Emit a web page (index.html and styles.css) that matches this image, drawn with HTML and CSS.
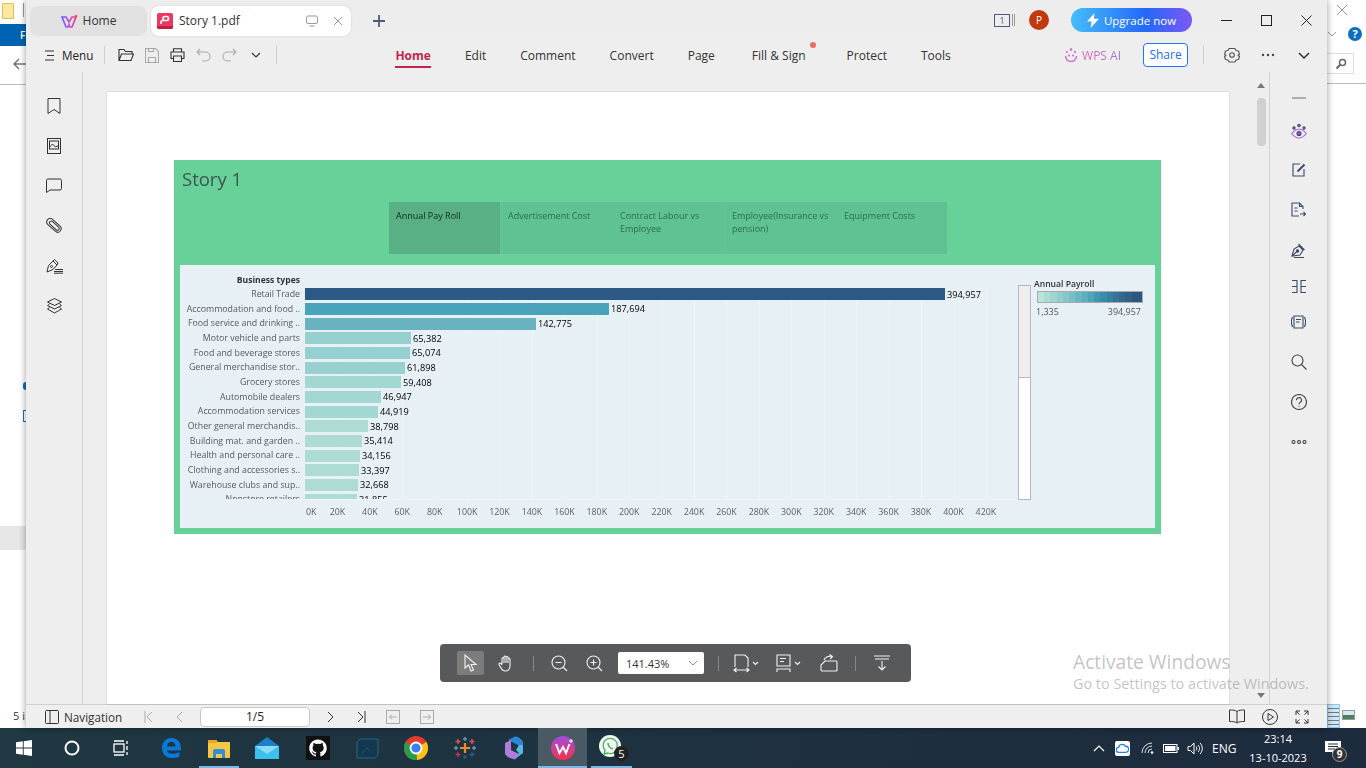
FILE: index.html
```html
<!DOCTYPE html>
<html lang="en">
<head>
<meta charset="utf-8">
<title>Story 1.pdf</title>
<link rel="stylesheet" href="styles.css">
</head>
<body>
<div class="desktop">
  <div class="behind">
    <div class="behind-left">
      <div class="bl-title"><span class="folder"></span><span class="bl-bar"></span></div>
      <div class="bl-ribbon">F</div>
      <div class="bl-nav"><svg width="16" height="14" viewBox="0 0 16 14" class="st"><path d="M15 7H2M7 2 2 7l5 5"/></svg></div>
      <span class="bl-dot"></span>
      <span class="bl-bracket"></span>
      <span class="bl-block"></span>
      <span class="bl-text">5 i</span>
    </div>
    <div class="behind-right">
      <div class="br-title"><svg width="12" height="12" viewBox="0 0 12 12" class="st thin"><path d="M1 1l10 10M11 1 1 11"/></svg></div>
      <div class="br-ribbon"><svg width="10" height="6" viewBox="0 0 10 6" class="st thin"><path d="M1 1l4 4 4-4"/></svg><span class="help">?</span></div>
      <div class="br-nav"><span class="br-search"><svg width="12" height="12" viewBox="0 0 12 12" class="st dark"><circle cx="7.500" cy="4.500" r="3"/><path d="M5.500 6.500 1.500 10.500" stroke-width="2"/></svg></span></div>
      <div class="br-status"><span class="br-list"></span><span class="br-img"></span></div>
    </div>
  </div>

  <div class="wps">
    <div class="tabbar">
      <div class="tab tab-home">
        <svg width="17" height="15" viewBox="0 0 17 15"><defs><linearGradient id="wg" x1="0" x2="1"><stop offset="0" stop-color="#6f5cf5"/><stop offset=".55" stop-color="#c050d8"/><stop offset="1" stop-color="#f0406a"/></linearGradient></defs><path d="M1 3h4l3 5 3-5h4l-4 10H9L8 10.500 7 13H5z" fill="none" stroke="url(#wg)" stroke-width="1.700"/><path d="M15 0l.6 1.400L17 2l-1.400.6L15 4l-.6-1.400L13 2l1.400-.6z" fill="#f0406a"/></svg>
        <span>Home</span>
      </div>
      <div class="tab tab-doc">
        <svg class="pdf" width="16" height="16" viewBox="0 0 16 16"><rect width="16" height="16" rx="2" fill="#e9395f"/><path d="M0 13h16v1a2 2 0 0 1-2 2H2a2 2 0 0 1-2-2z" fill="#c21f45"/><path d="M4 11V9.500a2 2 0 0 1 2-2h3.500a2 2 0 0 0 0-4H8a2 2 0 0 0-2 2v2" fill="none" stroke="#fff" stroke-width="1.700"/></svg>
        <span class="doc-name">Story 1.pdf</span>
        <svg class="doc-ic" width="12" height="12" viewBox="0 0 12 12"><rect x=".5" y="1" width="11" height="7.500" rx="1.500"/><path d="M3.500 11h5"/></svg>
        <svg class="doc-ic" width="10" height="10" viewBox="0 0 10 10"><path d="M1 1l8 8M9 1 1 9"/></svg>
      </div>
      <svg class="plus" width="14" height="14" viewBox="0 0 14 14"><path d="M7 1v12M1 7h12"/></svg>
      <div class="title-right">
        <span class="pagecount"><span class="pc-box">1</span><span class="pc-lines"></span></span>
        <span class="avatar">P</span>
        <span class="upgrade"><svg width="12" height="15" viewBox="0 0 12 15"><path d="M7.500 0 0 8.500h4.500L3.500 15 12 5.800H7z" fill="#fff"/></svg>Upgrade now</span>
        <svg class="winbtn" width="11" height="11" viewBox="0 0 11 11"><path d="M0 5.500h11"/></svg>
        <svg class="winbtn" width="11" height="11" viewBox="0 0 11 11"><rect x=".5" y=".5" width="10" height="10"/></svg>
        <svg class="winbtn" width="11" height="11" viewBox="0 0 11 11"><path d="M.5.500l10 10M10.500.500l-10 10"/></svg>
      </div>
    </div>

    <div class="ribbon">
      <div class="rb-left">
        <svg class="rb-ic" width="12" height="11" viewBox="0 0 12 11"><path d="M1 1h9M3 5.500h7M1 10h9"/></svg>
        <span class="menu-label">Menu</span>
        <span class="vsep"></span>
        <svg class="rb-ic" width="16" height="14" viewBox="0 0 16 14"><path d="M1 12V1.500h5l1.500 2H14V6M1 12.500 3.500 6h12L13 12.500z"/></svg>
        <svg class="rb-ic off" width="14" height="15" viewBox="0 0 14 15"><path d="M.5.500h10l3 3v11H.5zM3.500 14.500v-5h7v5M3.500.500v3h5v-3"/></svg>
        <svg class="rb-ic" width="15" height="14" viewBox="0 0 15 14"><path d="M3.500 4V.700h8V4M3.500 10.500H1V4h13v6.500h-2.500M3.500 8h8v5.500h-8z"/></svg>
        <svg class="rb-ic off" width="15" height="14" viewBox="0 0 15 14"><path d="M4 1 1 4l3 3M1 4h8.500a4.500 4.500 0 0 1 0 9H6"/></svg>
        <svg class="rb-ic off" width="15" height="14" viewBox="0 0 15 14"><path d="M11 1l3 3-3 3M14 4H5.500a4.500 4.500 0 0 0 0 9H9"/></svg>
        <svg class="rb-ic qa-more" width="10" height="6" viewBox="0 0 10 6"><path d="M1 1l4 4 4-4"/></svg>
        <span class="vsep"></span>
      </div>
      <nav class="rb-tabs">
        <span class="rb-tab active">Home</span>
        <span class="rb-tab">Edit</span>
        <span class="rb-tab">Comment</span>
        <span class="rb-tab">Convert</span>
        <span class="rb-tab">Page</span>
        <span class="rb-tab dotted">Fill &amp; Sign</span>
        <span class="rb-tab">Protect</span>
        <span class="rb-tab">Tools</span>
      </nav>
      <div class="rb-right">
        <svg width="14" height="15" viewBox="0 0 14 15"><path d="M1.500 8a5.500 5.500 0 0 0 11 0" fill="none" stroke="#d868c8" stroke-width="1.400"/><circle cx="7" cy="1.500" r="1.300" fill="#e060a8"/><circle cx="3" cy="4" r="1.100" fill="#d868c8"/><circle cx="11" cy="4" r="1.100" fill="#b070e8"/><circle cx="5" cy="7.500" r="1" fill="#c060d0"/><circle cx="9" cy="7.500" r="1" fill="#b070e8"/></svg>
        <span class="wpsai">WPS AI</span>
        <span class="share">Share</span>
        <span class="vsep"></span>
        <svg class="rb-ic gear" width="16" height="16" viewBox="0 0 16 16"><path d="M5 1.500h6l1 2 2.500.5 1 3.500-1.500 1 1.500 1-1 3-2.500.5-1 2H5l-1-2-2.500-.5-1-3 1.500-1-1.500-1 1-3.500L4 3.500z" stroke-linejoin="round"/><circle cx="8" cy="8" r="2.300"/></svg>
        <svg class="dots" width="14" height="4" viewBox="0 0 14 4"><circle cx="2" cy="2" r="1.200"/><circle cx="7" cy="2" r="1.200"/><circle cx="12" cy="2" r="1.200"/></svg>
        <svg class="rb-ic chev" width="12" height="7" viewBox="0 0 12 7"><path d="M1 1l5 5 5-5" stroke-width="1.500"/></svg>
      </div>
    </div>

    <div class="workspace">
      <aside class="side-left">
        <svg class="sd" width="14" height="16" viewBox="0 0 14 16"><path d="M1 .500h12v15L7 11.500l-6 4z"/></svg>
        <svg class="sd" width="14" height="16" viewBox="0 0 14 16"><rect x=".5" y=".5" width="13" height="15"/><rect x="2.500" y="3" width="9" height="8"/><path d="M2.500 9 5.500 6l3 3 3-1.500"/></svg>
        <svg class="sd" width="16" height="15" viewBox="0 0 16 15"><path d="M2 .500h12A1.500 1.500 0 0 1 15.500 2v8a1.500 1.500 0 0 1-1.500 1.500H4L.5 14V2A1.500 1.500 0 0 1 2 .500z"/></svg>
        <svg class="sd" width="16" height="16" viewBox="0 0 16 16"><rect x="-1" y="4" width="17" height="7" rx="3.500" transform="rotate(42 8 8)"/><rect x="2" y="5.800" width="12" height="3.500" rx="1.700" transform="rotate(42 8 8)"/></svg>
        <svg class="sd" width="17" height="15" viewBox="0 0 17 15"><path d="M1 13.500 2.500 7 7 2.500 11 6.500 7 11zM7 2.500 8.500 1 12 4.500 11 6.500"/><circle cx="5.500" cy="8" r="1"/><path d="M9 11h8M8 13h9M8 14.700h9"/></svg>
        <svg class="sd" width="15" height="16" viewBox="0 0 15 16"><path d="M7.500.500 14.500 4l-7 3.500L.5 4zM2.500 6 .5 7.500l7 3.500 7-3.500L12.500 6M2.500 9.500l-2 1.500 7 4 7-4-2-1.500"/></svg>
      </aside>

      <main class="doc">
        <div class="page">
          <section class="story">
            <h1 class="story-title">Story 1</h1>
            <div class="points">
              <div class="point current">Annual Pay Roll</div>
              <div class="point">Advertisement Cost</div>
              <div class="point split">Contract Labour vs Employee</div>
              <div class="point">Employee(Insurance vs pension)</div>
              <div class="point">Equipment Costs</div>
            </div>
            <div class="pane">
              <div class="chart">
                <div class="chart-head">Business types</div>
                <div class="chart-body">
                  <div class="labels">
                    <div class="lab">Retail Trade</div>
                    <div class="lab">Accommodation and food ..</div>
                    <div class="lab">Food service and drinking ..</div>
                    <div class="lab">Motor vehicle and parts</div>
                    <div class="lab">Food and beverage stores</div>
                    <div class="lab">General merchandise stor..</div>
                    <div class="lab">Grocery stores</div>
                    <div class="lab">Automobile dealers</div>
                    <div class="lab">Accommodation services</div>
                    <div class="lab">Other general merchandis..</div>
                    <div class="lab">Building mat. and garden ..</div>
                    <div class="lab">Health and personal care ..</div>
                    <div class="lab">Clothing and accessories s..</div>
                    <div class="lab">Warehouse clubs and sup..</div>
                    <div class="lab">Nonstore retailers</div>
                  </div>
                  <div class="plot">
                    <div class="row"><span class="bar" style="width:640px;background:#2c5985"></span><span class="val">394,957</span></div>
                    <div class="row"><span class="bar" style="width:304px;background:#49a3ba"></span><span class="val">187,694</span></div>
                    <div class="row"><span class="bar" style="width:231px;background:#69b3c1"></span><span class="val">142,775</span></div>
                    <div class="row"><span class="bar" style="width:106px;background:#96cfcf"></span><span class="val">65,382</span></div>
                    <div class="row"><span class="bar" style="width:105px;background:#96cfcf"></span><span class="val">65,074</span></div>
                    <div class="row"><span class="bar" style="width:100px;background:#98d0cf"></span><span class="val">61,898</span></div>
                    <div class="row"><span class="bar" style="width:96px;background:#a3d7d1"></span><span class="val">59,408</span></div>
                    <div class="row"><span class="bar" style="width:76px;background:#a3d7d1"></span><span class="val">46,947</span></div>
                    <div class="row"><span class="bar" style="width:73px;background:#a3d7d1"></span><span class="val">44,919</span></div>
                    <div class="row"><span class="bar" style="width:63px;background:#aedcd5"></span><span class="val">38,798</span></div>
                    <div class="row"><span class="bar" style="width:57px;background:#aedcd5"></span><span class="val">35,414</span></div>
                    <div class="row"><span class="bar" style="width:55px;background:#aedcd5"></span><span class="val">34,156</span></div>
                    <div class="row"><span class="bar" style="width:54px;background:#aedcd5"></span><span class="val">33,397</span></div>
                    <div class="row"><span class="bar" style="width:53px;background:#aedcd5"></span><span class="val">32,668</span></div>
                    <div class="row"><span class="bar" style="width:52px;background:#aedcd5"></span><span class="val">31,855</span></div>
                  </div>
                </div>
                <div class="axis">
                  <span class="tick first">0K</span><span class="tick">20K</span><span class="tick">40K</span><span class="tick">60K</span><span class="tick">80K</span><span class="tick">100K</span><span class="tick">120K</span><span class="tick">140K</span><span class="tick">160K</span><span class="tick">180K</span><span class="tick">200K</span><span class="tick">220K</span><span class="tick">240K</span><span class="tick">260K</span><span class="tick">280K</span><span class="tick">300K</span><span class="tick">320K</span><span class="tick">340K</span><span class="tick">360K</span><span class="tick">380K</span><span class="tick">400K</span><span class="tick">420K</span>
                </div>
              </div>
              <div class="vscroll"><div class="vthumb"></div></div>
              <div class="legend">
                <div class="legend-title">Annual Payroll</div>
                <div class="ramp"></div>
                <div class="legend-scale"><span>1,335</span><span>394,957</span></div>
              </div>
            </div>
          </section>
        </div>
        <div class="doc-scroll">
          <span class="arrow-up"></span>
          <span class="doc-thumb"></span>
          <span class="arrow-down"></span>
        </div>
      </main>

      <aside class="side-right">
        <svg class="sr mb25" width="14" height="2" viewBox="0 0 14 2"><path d="M0 1h14" stroke="#999" stroke-width="1.500"/></svg>
        <svg class="sr mb24" width="16" height="15" viewBox="0 0 16 15"><path d="M.7 9.500C3 6.500 5.500 5.300 8 5.300s5 1.200 7.300 4.200C13 12.500 10.500 14 8 14S3 12.500.7 9.500z" fill="none" stroke="#b060e0" stroke-width="1.100"/><circle cx="8" cy="9.500" r="2" fill="#8a50d8"/><circle cx="8" cy="1.500" r="1.200" fill="#e060a0"/><circle cx="3" cy="4" r="1.100" fill="#d868c0"/><circle cx="13" cy="4" r="1.100" fill="#b070e0"/></svg>
        <svg class="sr mb25" width="14" height="14" viewBox="0 0 14 14"><path d="M8 1H1v12h11V6"/><path d="M5.500 8.500 12.500 1.500" stroke-width="2"/></svg>
        <svg class="sr mb26" width="15" height="15" viewBox="0 0 15 15"><path d="M12 7V4.500L8.500 1H1v13h7"/><path d="M8.500 1v3.500H12M3.500 6h3M3.500 9h3M9 12h5.500M12.500 10l2 2-2 2"/></svg>
        <svg class="sr mb22" width="15" height="15" viewBox="0 0 15 15"><path d="M1 13 3 6l5-3 4 4-3 5zM7.500 1l6 6"/><circle cx="6.500" cy="8" r="1.200" fill="#3d4a66"/><path d="M1 13l4.500-4M3 14.500h10"/></svg>
        <svg class="sr mb22" width="14" height="13" viewBox="0 0 14 13"><path d="M0 .5h5v12H0M14 .5H9v12h5M0 6.500h5M9 6.500h5"/></svg>
        <svg class="sr mb25" width="15" height="14" viewBox="0 0 15 14"><path d="M3 1h9v12H3zM5 4.500h5M5 7h3.500M1.500 2C.2 5 .2 9 1.500 12M13.500 2c1.300 3 1.300 7 0 10"/></svg>
        <svg class="sr gray mb24" width="16" height="16" viewBox="0 0 16 16"><circle cx="6.500" cy="6.500" r="5.500"/><path d="M10.500 10.500 15.500 15.500"/></svg>
        <svg class="sr gray mb30" width="16" height="16" viewBox="0 0 16 16"><circle cx="8" cy="8" r="7.500"/><path d="M5.500 6.200a2.500 2.500 0 1 1 3.600 2.200C8.300 8.900 8 9.300 8 10.300M8 11.800v1"/></svg>
        <svg class="sr gray" width="16" height="4" viewBox="0 0 16 4"><circle cx="2.500" cy="2" r="1.500"/><circle cx="8" cy="2" r="1.500"/><circle cx="13.500" cy="2" r="1.500"/></svg>
      </aside>
    </div>

    <footer class="status">
      <svg class="stt" width="14" height="14" viewBox="0 0 14 14"><rect x=".5" y=".5" width="13" height="13" rx="1"/><path d="M5 .5v13"/></svg>
      <span class="nav-label">Navigation</span>
      <svg class="stt off first-nav" width="9" height="12" viewBox="0 0 9 12"><path d="M1 0v12M8 1 3 6l5 5"/></svg>
      <svg class="stt off prev-nav" width="7" height="12" viewBox="0 0 7 12"><path d="M6 1 1 6l5 5"/></svg>
      <span class="page-input">1/5</span>
      <svg class="stt next-nav" width="7" height="12" viewBox="0 0 7 12"><path d="M1 1l5 5-5 5"/></svg>
      <svg class="stt last-nav" width="9" height="12" viewBox="0 0 9 12"><path d="M8 0v12M1 1l5 5-5 5"/></svg>
      <svg class="stt off back-nav" width="14" height="14" viewBox="0 0 14 14"><rect x=".5" y=".5" width="13" height="13"/><path d="M11 7H3.500M6 4.500 3.500 7 6 9.500"/></svg>
      <svg class="stt off fwd-nav" width="14" height="14" viewBox="0 0 14 14"><rect x=".5" y=".5" width="13" height="13"/><path d="M3 7h7.500M8 4.500 10.500 7 8 9.500"/></svg>
      <div class="status-right">
        <svg class="stt" width="16" height="15" viewBox="0 0 16 15"><path d="M8 2.500C6 1 3.500 1 .5 1v11.500c3 0 5.500 0 7.500 1.500 2-1.500 4.500-1.500 7.500-1.500V1C12.500 1 10 1 8 2.500zM8 2.500V14"/></svg>
        <svg class="stt" width="16" height="16" viewBox="0 0 16 16"><circle cx="8" cy="8" r="7.500"/><path d="M6 4.500 11.500 8 6 11.500z"/></svg>
        <svg class="stt" width="14" height="14" viewBox="0 0 14 14"><path d="M1 5V1h4M9 1h4v4M13 9v4H9M5 13H1V9M1 1l3.500 3.500M13 1 9.500 4.500M13 13 9.500 9.500M1 13l3.500-3.500"/></svg>
      </div>
    </footer>

    <div class="float-bar">
      <span class="fb-btn on"><svg class="fb" width="15" height="18" viewBox="0 0 15 18"><path d="M2 1v13l3.500-3 2.500 6 2.500-1-2.500-5.500H13z"/></svg></span>
      <span class="fb-btn hand"><svg class="fb" width="15" height="17" viewBox="0 0 15 17"><path d="M4 9V3.500a1 1 0 0 1 2 0V8M6 8V2a1 1 0 0 1 2 0v6M8 8V2.500a1 1 0 0 1 2 0V8M10 8V4a1 1 0 0 1 2 0v7c0 3-2 5-4.500 5S4 15 3 13L1 9.500c-.5-1 1-2 2-1L4 10"/></svg></span>
      <span class="fb-sep"></span>
      <span class="fb-btn"><svg class="fb" width="17" height="17" viewBox="0 0 17 17"><circle cx="7.500" cy="7.500" r="6.500"/><path d="M4.500 7.500h6M12 12l4 4"/></svg></span>
      <span class="fb-btn"><svg class="fb" width="17" height="17" viewBox="0 0 17 17"><circle cx="7.500" cy="7.500" r="6.500"/><path d="M4.500 7.500h6M7.500 4.500v6M12 12l4 4"/></svg></span>
      <span class="zoom-box"><span>141.43%</span><svg class="zb-chev" width="10" height="6" viewBox="0 0 10 6"><path d="M1 1l4 4 4-4"/></svg></span>
      <span class="fb-sep"></span>
      <span class="fb-btn wide"><svg class="fb" width="26" height="19" viewBox="0 0 26 19"><path d="M2 13V1h10l3 3v9M1 16h15M3.500 14 1 16l2.500 2M13.500 14l2.500 2-2.500 2M20 8l2.500 2.500L25 8"/></svg></span>
      <span class="fb-btn wide"><svg class="fb" width="26" height="19" viewBox="0 0 26 19"><path d="M2 1h13v11H2zM5 4.500h6M5 7.500h4M2 18v-3h13v3M20 8l2.500 2.500L25 8"/></svg></span>
      <span class="fb-btn rot"><svg class="fb" width="18" height="18" viewBox="0 0 18 18"><path d="M5 7h11a1 1 0 0 1 1 1v8a1 1 0 0 1-1 1H2a1 1 0 0 1-1-1v-5zM4 6c1-3 5-4.500 8-3.500M9.500.500 12.500 2.500 10 5"/></svg></span>
      <span class="fb-sep"></span>
      <span class="fb-btn"><svg class="fb" width="16" height="16" viewBox="0 0 16 16"><path d="M0 1h16M1 4h14M8 6v9M4.500 11.500 8 15l3.500-3.500"/></svg></span>
    </div>

    <div class="watermark"><div class="wm-big">Activate Windows</div><div class="wm-small">Go to Settings to activate Windows.</div></div>
  </div>
</div>

<div class="taskbar">
  <div class="tb-group">
    <span class="tb-cell"><svg width="16" height="16" viewBox="0 0 16 16"><path d="M0 2.300 6.800 1.300V7.500H0zM7.700 1.200 16 0v7.500H7.700zM0 8.500h6.800v6.200L0 13.700zM7.700 8.500H16V16L7.700 14.800z" fill="#fff"/></svg></span>
    <span class="tb-cell"><svg width="16" height="16" viewBox="0 0 16 16"><circle cx="8" cy="8" r="6.500" fill="none" stroke="#fff" stroke-width="2"/></svg></span>
    <span class="tb-cell"><svg width="17" height="16" viewBox="0 0 17 16" class="st white"><rect x="2" y="4" width="10" height="8"/><path d="M2 1h10M2 15h10M15 1v3M15 6v4M15 12v3"/></svg></span>
  </div>
  <div class="tb-group apps1">
    <span class="tb-cell"><svg width="20" height="22" viewBox="0 0 20 22"><path d="M1 11C1 5 5 1 10.500 1S20 5 20 11.500v2H6c.5 3.500 6.500 4.500 12.500 1.500v4.500C11 23 1 21 1 11zM6 9.500h8.500C14.500 6 12 4.800 10 4.800S6.500 6.500 6 9.500z" fill="#0a78d7"/></svg></span>
    <span class="tb-cell"><svg width="22" height="20" viewBox="0 0 22 20"><path d="M0 3a1 1 0 0 1 1-1h7l2 2h12v15a1 1 0 0 1-1 1H1a1 1 0 0 1-1-1z" fill="#f3c644"/><rect y="2" width="9" height="3" fill="#e8a820"/><path d="M5 20v-7a2 2 0 0 1 2-2h8a2 2 0 0 1 2 2v7h-3v-4H8v4z" fill="#2d8fd8"/></svg></span>
    <span class="tb-cell"><svg width="24" height="22" viewBox="0 0 24 22"><path d="M12 0 24 9v13H0V9z" fill="#1b7fc9"/><path d="M0 9h24v13H0z" fill="#3cc0f0"/><path d="M0 9l12 8 12-8" fill="#8adcf8"/></svg></span>
  </div>
  <div class="tb-group apps2">
    <span class="tb-cell"><svg width="24" height="24" viewBox="0 0 24 24"><rect width="24" height="24" fill="#111"/><path d="M12 3.500a8.700 8.700 0 0 0-2.700 17c.4.100.6-.2.600-.4v-1.600c-2.400.5-2.900-1.100-2.900-1.100-.4-1-1-1.300-1-1.300-.8-.5.100-.5.100-.5.900.1 1.300.9 1.300.9.800 1.300 2 .9 2.500.7.100-.6.300-1 .6-1.200-1.900-.2-3.900-1-3.900-4.300 0-1 .3-1.700.9-2.300-.1-.2-.4-1.100.1-2.300 0 0 .7-.2 2.400.9a8 8 0 0 1 4.300 0c1.700-1.100 2.400-.9 2.400-.9.500 1.200.2 2.100.1 2.300.6.600.9 1.400.9 2.300 0 3.300-2 4.100-3.900 4.300.3.300.6.800.6 1.600v2.400c0 .2.200.5.600.4A8.700 8.700 0 0 0 12 3.500z" fill="#fff"/></svg></span>
    <span class="tb-cell"><svg width="24" height="24" viewBox="0 0 24 24"><path d="M5 3h18v16l-3 3H2V6z" fill="#14384e" stroke="#1c6a80"/><path d="M7 17l5-5 3 3" stroke="#1c5a78" fill="none"/></svg></span>
    <span class="tb-cell"><svg width="24" height="24" viewBox="0 0 24 24"><circle cx="12" cy="12" r="12" fill="#e33b2e"/><path d="M12 12 22.400 6A12 12 0 0 1 13 24z" fill="#f9c413"/><path d="M12 12 13 24A12 12 0 0 1 1.600 6z" fill="#2a9d4a"/><circle cx="12" cy="12" r="5.500" fill="#3c80f0" stroke="#fff" stroke-width="1.800"/></svg></span>
    <span class="tb-cell"><svg width="24" height="24" viewBox="0 0 24 24"><path d="M12 7v10M7 12h10" stroke="#ef8a2c" stroke-width="2.200"/><path d="M5 3v5M2.500 5.500h5M19 3v5M16.500 5.500h5" stroke="#dd5050" stroke-width="1.500"/><path d="M12 1v4M10 3h4M21 10v4M19 12h4M3 10v4M1 12h4" stroke="#6c93ad" stroke-width="1.500"/><path d="M5 16v5M2.500 18.500h5" stroke="#c8344c" stroke-width="1.500"/><path d="M19 16v5M16.500 18.500h5M12 19v4M10 21h4" stroke="#2c5985" stroke-width="1.500"/></svg></span>
    <span class="tb-cell"><svg width="22" height="24" viewBox="0 0 22 24"><path d="M5 4 12 .5c3 0 6 2 8 5v6L13 8z" fill="#2b88d8"/><path d="M2 7 8 4v10l8 4-4 5.500C7 23 2 20 2 17z" fill="#b07cd8"/><path d="M20 9v8l-8 6 4-6-3-3 3-5z" fill="#5ab8e8"/><path d="M8 9l6 2-2 5-4-2z" fill="#24384a"/></svg></span>
    <span class="tb-cell active"><svg width="24" height="24" viewBox="0 0 24 24"><defs><linearGradient id="wt" x1="0" y1="0" x2="0" y2="1"><stop offset="0" stop-color="#a04ce0"/><stop offset="1" stop-color="#f8304c"/></linearGradient></defs><circle cx="12" cy="12" r="12" fill="url(#wt)"/><path d="M5 8l3.500 9 3.500-6 3 6 3.500-9" fill="none" stroke="#fff" stroke-width="2"/><path d="M20 3v4M18 5h4" stroke="#fff"/></svg></span>
    <span class="tb-cell marked"><svg width="26" height="26" viewBox="0 0 26 26"><circle cx="11" cy="11" r="11" fill="#f4f6f5"/><path d="M6 15 5 19l4-1c4 2 9-1 9-6a7 7 0 1 0-12 3z" fill="none" stroke="#3cb45a" stroke-width="1.300"/><path d="M9 8c0 3 2 5 5 6" stroke="#3cb45a" stroke-width="1.500" fill="none"/></svg><span class="wa-badge">5</span></span>
  </div>
  <div class="tray">
    <svg class="tr-chev" width="12" height="7" viewBox="0 0 12 7"><path d="M1 6l5-5 5 5" fill="none" stroke="#fff" stroke-width="1.200"/></svg>
    <span class="tr-cloud"><svg width="13" height="10" viewBox="0 0 13 10"><path d="M3 9.300a2.500 2.500 0 0 1-.3-5 3.500 3.500 0 0 1 6.600-1 2.800 2.800 0 0 1 .7 6H3z" fill="none" stroke="#2a7ff0" stroke-width="1.300"/></svg></span>
    <svg class="tr-wifi" width="14" height="12" viewBox="0 0 14 12"><g fill="none" stroke="#ddd"><path d="M1 11A10 10 0 0 1 11 1"/><path d="M4 11A7 7 0 0 1 11 4"/><path d="M7 11A4 4 0 0 1 11 7"/></g><circle cx="11" cy="10.500" r="1.300" fill="#fff"/></svg>
    <svg class="tr-batt" width="16" height="9" viewBox="0 0 16 9"><rect x=".5" y=".5" width="13.500" height="8" fill="none" stroke="#fff"/><rect x="2" y="2" width="10.500" height="5" fill="#fff"/><rect x="14.500" y="3" width="1.500" height="3" fill="#fff"/></svg>
    <svg class="tr-vol" width="17" height="13" viewBox="0 0 17 13"><g fill="none" stroke="#fff"><path d="M1 4.500h2.500L7 1v11L3.500 8.500H1z"/><path d="M9 4.500c1 1 1 3 0 4M11 3c2 2 2 5 0 7M13 1c3 3 3 8 0 11"/></g></svg>
    <span class="tr-eng">ENG</span>
    <span class="tr-clock"><span>23:14</span><span>13-10-2023</span></span>
    <span class="tr-note"><svg width="16" height="14" viewBox="0 0 16 14"><path d="M0 0h16v11H9l-2 3v-3H0z" fill="#fff"/><path d="M3 3h10M3 5.500h10M3 8h7" stroke="#1c2b3c"/></svg><span class="note-badge">9</span></span>
  </div>
</div>
</body>
</html>
```

FILE: styles.css
```css
* { box-sizing: border-box; }
html, body { margin: 0; padding: 0; }
body {
  width: 1366px;
  height: 768px;
  overflow: hidden;
  font-family: "Open Sans", "Liberation Sans", sans-serif;
  color: #222;
  background: #fff;
}
svg { display: block; flex: none; }
.st { fill: none; stroke: #777; stroke-width: 1.500; }
.st.thin { stroke: #999; stroke-width: 1; }
.st.dark { stroke: #666; }
.st.white { stroke: #fff; stroke-width: 1.300; }

.desktop { position: relative; width: 1366px; height: 728px; }

/* window behind */
.behind { display: flex; justify-content: space-between; height: 728px; background: #fff; }
.behind-left { width: 26px; display: flex; flex-direction: column; position: relative; }
.behind-right { width: 39px; display: flex; flex-direction: column; }
.bl-title { height: 24px; display: flex; padding: 3px 0 0 2px; gap: 9px; }
.folder { width: 12px; height: 16px; background: #fde9a2; border: 1px solid #e6c050; }
.bl-bar { width: 1px; height: 14px; background: #999; }
.bl-ribbon { height: 22px; background: #0063b1; color: #fff; font-size: 10px; line-height: 22px; padding-left: 20px; font-weight: 600; }
.bl-nav { height: 39px; border-bottom: 1px solid #bbb; padding: 11px 0 0 12px; }
.bl-dot { width: 6px; height: 8px; border-radius: 3px; background: #0a6fb8; margin: 297px 0 0 23px; }
.bl-bracket { width: 4px; height: 12px; border: 1px solid #2b6a9b; border-right: 0; margin: 20px 0 0 23px; }
.bl-block { height: 24px; background: #e6e6e6; margin-top: 104px; }
.bl-text { font-size: 11px; color: #333; margin: 158px 0 0 13px; white-space: nowrap; }
.br-title { height: 24px; padding: 4px 0 0 9px; }
.br-ribbon { height: 20px; display: flex; gap: 11px; align-items: center; }
.help { width: 14px; height: 14px; border-radius: 50%; background: #0a6fc0; color: #fff; font-size: 11px; font-weight: 700; line-height: 14px; text-align: center; }
.br-nav { height: 40px; border-bottom: 1px solid #bbb; padding-top: 9px; }
.br-search { width: 27px; height: 21px; border: 1px solid #ddd; border-left: 0; display: flex; align-items: center; justify-content: flex-end; padding-right: 6px; }
.br-status { margin-top: 620px; height: 24px; display: flex; }
.br-list { width: 13px; height: 24px; background: #cde8f7; border: 1px solid #8cc8ea; background-image: repeating-linear-gradient(#cde8f7 0 3px, #777 3px 4px); }
.br-img { width: 13px; height: 10px; margin: 6px 0 0 2px; background: linear-gradient(#d5e9f5 50%, #4e8060 50%); border: 1px solid #999; }

/* WPS window */
.wps {
  position: absolute;
  left: 26px;
  top: 0;
  width: 1301px;
  height: 728px;
  background: #eeeeee;
  box-shadow: 0 0 7px rgba(0,0,0,.4);
  display: flex;
  flex-direction: column;
}
.tabbar { height: 38px; display: flex; align-items: flex-start; padding: 6px 0 0 4px; flex: none; background: #ededed; }
.tab { height: 30px; border-radius: 8px; display: flex; align-items: center; font-size: 12px; line-height: 28px; color: #333; }
.tab-home { width: 117px; background: #e1e1e1; justify-content: center; gap: 5px; }
.tab-doc { width: 200px; margin-left: 4px; background: #fff; padding: 0 8px 0 6px; box-shadow: 0 0 2px rgba(0,0,0,.15); }
.doc-name { margin-left: 6px; flex: 1; }
.doc-ic { fill: none; stroke: #999; stroke-width: 1; margin-right: 11px; }
.doc-ic:last-child { margin-right: 0; margin-left: 4px; }
.plus { fill: none; stroke: #4f5a78; stroke-width: 1.800; margin: 8px 0 0 21px; }
.title-right { margin-left: auto; height: 28px; display: flex; align-items: center; }
.pagecount { display: flex; align-items: center; gap: 2px; margin-right: 13px; }
.pc-box { width: 16px; height: 13px; border: 1px solid #4f5a78; font-size: 9px; line-height: 12px; text-align: center; color: #4f5a78; }
.pc-lines { width: 4px; height: 12px; background: repeating-linear-gradient(90deg, #999 0 1px, transparent 1px 2px); }
.avatar { width: 20px; height: 20px; border-radius: 50%; background: #c1390e; color: #fff; font-size: 10px; line-height: 20px; text-align: center; margin-right: 22px; }
.upgrade { width: 121px; height: 24px; border-radius: 12px; background: linear-gradient(90deg, #45bdfb, #2468f8 62%, #7d58f6); color: #fff; font-size: 11.500px; display: flex; align-items: center; justify-content: center; gap: 5px; margin-right: 29px; }
.winbtn { fill: none; stroke: #222; stroke-width: 1; margin-right: 29px; }
.winbtn:last-child { margin-right: 15px; }

.ribbon { height: 34px; display: flex; align-items: center; position: relative; flex: none; }
.rb-left { display: flex; align-items: center; padding-left: 18px; }
.rb-ic { fill: none; stroke: #333; stroke-width: 1.100; margin-right: 11px; }
.rb-ic.off { stroke: #aaa; }
.qa-more { margin-left: 3px; }
.menu-label { font-size: 11.700px; margin-left: -5px; }
.vsep { width: 1px; height: 18px; background: #d0d0d0; }
.menu-label + .vsep { margin: 0 13px 0 11px; }
.rb-ic + .vsep { margin-left: 4px; }
.rb-tabs { display: flex; gap: 34px; margin-left: 118px; font-size: 12px; }
.rb-tab { color: #333; line-height: 36px; height: 34px; position: relative; white-space: nowrap; }
.rb-tab.active { color: #c2244c; font-weight: 700; }
.rb-tab.active::after { content: ""; position: absolute; left: 0; right: 0; bottom: 4px; height: 2px; background: #c2244c; }
.rb-tab.dotted { margin: 0 7px 0 3px; }
.rb-tab.dotted::after { content: ""; position: absolute; right: -10px; top: 4px; width: 6px; height: 6px; border-radius: 50%; background: #f06a6a; }
.rb-right { margin-left: auto; display: flex; align-items: center; padding-right: 17px; }
.wpsai { font-size: 12px; margin: 0 22px 0 4px; background: linear-gradient(90deg, #e068b0, #a070e8); -webkit-background-clip: text; background-clip: text; color: transparent; }
.share { width: 45px; height: 24px; border: 1px solid #2078f0; border-radius: 4px; background: #fff; color: #1a6cf0; font-size: 12px; line-height: 22px; text-align: center; margin-right: 15px; }
.rb-right .vsep { margin-right: 20px; }
.gear { margin-right: 21px; stroke: #555; }
.dots { fill: #444; margin-right: 23px; }
.chev { margin-right: 0; }

.workspace { flex: 1; display: flex; min-height: 0; }
.side-left { width: 57px; border-right: 1px solid #d2d2d2; display: flex; flex-direction: column; align-items: center; padding-top: 26px; gap: 24px; flex: none; }
.sd { fill: none; stroke: #333; stroke-width: 1; height: 16px; }
.doc { flex: 1; display: flex; min-width: 0; position: relative; padding: 20px 0 0 24px; }
.page { width: 1122px; height: 612px; background: #fff; box-shadow: 0 0 1px rgba(0,0,0,.4); padding: 68px 0 0 67px; flex: none; }
.doc-scroll { width: 40px; display: flex; flex-direction: column; align-items: center; margin-top: -20px; padding-left: 24px; position: relative; }
.arrow-up { width: 0; height: 0; border: 4px solid transparent; border-top: 0; border-bottom: 5px solid #777; margin-top: 11px; }
.doc-thumb { width: 9px; height: 48px; background: #d0d0d0; border-radius: 4px; margin-top: 10px; }
.arrow-down { width: 0; height: 0; border: 4px solid transparent; border-bottom: 0; border-top: 5px solid #777; margin-top: auto; margin-bottom: 6px; }
.side-right { width: 58px; border-left: 1px solid #d2d2d2; display: flex; flex-direction: column; align-items: center; flex: none; padding-top: 25px; }
.sr { fill: none; stroke: #3d4a66; stroke-width: 1.100; }
.sr.gray { stroke: #444; }
.mb22 { margin-bottom: 22px; }
.mb24 { margin-bottom: 24px; }
.mb25 { margin-bottom: 25px; }
.mb26 { margin-bottom: 26px; }
.mb30 { margin-bottom: 30px; }

/* story */
.story { width: 987px; height: 374px; background: #68d19a; padding: 0 6px 6px; display: flex; flex-direction: column; filter: blur(.3px); }
.story-title { margin: 0; height: 42px; font-size: 18.500px; font-weight: 400; color: #3c5552; line-height: 38px; padding-left: 2px; }
.points { display: flex; width: 558px; height: 52px; margin-left: 209px; background: #5ec292; flex: none; }
.point { width: 112px; padding: 7px 0 0 7px; font-size: 9px; line-height: 13px; color: #2f6d50; }
.point:nth-child(5) { width: 102px; }
.point.current { background: #59b085; color: #0b2b1c; border-right: 1px solid #68c498; }
.point.split { border-right: 1px solid #68c498; }
.pane { margin-top: 11px; flex: 1; background: #e6f0f5; display: flex; min-height: 0; }
.chart { width: 838px; display: flex; flex-direction: column; flex: none; }
.chart-head { height: 22px; width: 120px; text-align: right; font-size: 8.600px; font-weight: 700; color: #333; padding-top: 9px; line-height: 12px; white-space: nowrap; }
.chart-body { height: 212px; display: flex; overflow: hidden; flex: none; }
.labels { width: 125px; flex: none; padding-right: 5px; }
.lab { height: 14.667px; line-height: 14.667px; font-size: 8.800px; color: #5a5a5a; text-align: right; white-space: nowrap; }
.plot { flex: 1; background-image: linear-gradient(90deg, #eef4f7 1px, transparent 1px); background-size: 32.430px 100%; background-position: 32.430px 0; }
.row { height: 14.667px; display: flex; align-items: center; }
.bar { height: 12px; display: block; flex: none; }
.val { margin-left: 2px; font-size: 9.200px; color: #000; white-space: nowrap; }
.axis { margin-left: 125px; border-top: 1px solid #eef4f7; display: flex; padding-top: 6px; color: #5f5f5f; font-size: 8.800px; line-height: 12px; }
.tick { width: 32.430px; flex: none; text-align: center; white-space: nowrap; }
.tick.first { width: 16.215px; text-align: left; padding-left: 1px; }
.vscroll { width: 13px; height: 215px; margin-top: 20px; border: 1px solid #b8b8b8; background: #fff; flex: none; }
.vthumb { height: 92px; background: #eeeeee; border-bottom: 1px solid #b8b8b8; }
.legend { margin-left: 3px; width: 112px; padding-top: 13px; font-size: 8.600px; }
.legend-title { color: #333; line-height: 12px; font-weight: 600; }
.ramp { height: 12px; width: 106px; margin: 1px 0 0 3px; border: 1px solid #aaa; background: linear-gradient(90deg, #bce4da 0 6%, #abdcd5 6% 12%, #9fd5d0 12% 18%, #93cdcc 18% 24%, #86c6ca 24% 30%, #78bec6 30% 36%, #6ab5c2 36% 42%, #5cadbd 42% 48%, #4ea5b9 48% 54%, #3f98b3 54% 60%, #3a8cab 60% 66%, #3880a2 66% 72%, #367598 72% 78%, #34698f 78% 84%, #315f88 84% 90%, #2d5683 90% 100%); }
.legend-scale { display: flex; justify-content: space-between; width: 105px; margin: 3px 0 0 2px; color: #555; line-height: 12px; font-size: 9px; }

/* status bar */
.status { height: 24px; flex: none; border-top: 1px solid #cfcfcf; display: flex; align-items: center; padding-left: 19px; background: #efefef; }
.stt { fill: none; stroke: #333; stroke-width: 1; }
.stt.off { stroke: #aaa; }
.nav-label { font-size: 11.700px; margin-left: 5px; color: #333; width: 80px; }
.prev-nav { margin-left: 23px; }
.page-input { width: 110px; height: 20px; margin-left: 17px; background: #fff; border: 1px solid #c8c8c8; border-radius: 4px; font-size: 12px; line-height: 18px; text-align: center; }
.next-nav { margin-left: 17px; }
.last-nav { margin-left: 23px; }
.back-nav { margin-left: 20px; }
.fwd-nav { margin-left: 20px; }
.status-right { margin-left: auto; margin-right: 18px; display: flex; align-items: center; gap: 17px; }

/* floating toolbar */
.float-bar { position: absolute; left: 414px; top: 644px; width: 471px; height: 38px; background: #58595b; border-radius: 4px; display: flex; align-items: center; padding-left: 17px; }
.fb-btn { width: 27px; height: 24px; display: flex; align-items: center; justify-content: center; border-radius: 2px; flex: none; margin-right: 8px; }
.fb-btn.on { background: #7c7c7c; }
.fb-btn.hand { margin-right: 10px; }
.fb-btn.wide { width: 30px; margin-right: 12px; }
.fb-btn.rot { margin-right: 9px; }
.fb { fill: none; stroke: #f2f2f2; stroke-width: 1.100; }
.fb-sep { width: 1px; height: 15px; background: #888; margin: 0 12px 0 4px; flex: none; }
.zoom-box { width: 86px; height: 22px; background: #fff; border-radius: 2px; font-size: 11px; color: #333; display: flex; align-items: center; justify-content: space-between; padding: 0 6px 0 8px; margin: 0 10px 0 2px; flex: none; }
.zb-chev { fill: none; stroke: #888; stroke-width: 1; }

.watermark { position: absolute; left: 1047px; top: 650px; width: 260px; color: rgba(120,120,120,.45); pointer-events: none; white-space: nowrap; }
.wm-big { font-size: 19.200px; line-height: 23px; }
.wm-small { font-size: 14.400px; line-height: 20px; margin-top: 1px; }

/* taskbar */
.taskbar { height: 40px; background: linear-gradient(90deg, #1f3842, #1d2b3e); display: flex; align-items: stretch; }
.tb-group { display: flex; }
.tb-group .tb-cell { width: 48px; display: flex; align-items: center; justify-content: center; position: relative; }
.apps1 { margin-left: 3px; }
.apps2 { margin-left: 2px; }
.apps2 .tb-cell { width: 49px; }
.apps1 .tb-cell:nth-child(2)::after, .tb-cell.marked::after, .tb-cell.active::after { content: ""; position: absolute; left: 4px; right: 4px; bottom: 0; height: 2px; background: #76b9ed; }
.tb-cell.active { background: #4a5a64; }
.tb-cell.active::after { left: 0; right: 0; }
.wa-badge { position: absolute; left: 27px; top: 18px; width: 15px; height: 15px; border-radius: 50%; background: #222; color: #fff; font-size: 11px; line-height: 15px; text-align: center; }
.tray { margin-left: auto; display: flex; align-items: center; position: relative; color: #fff; }
.tr-chev { margin-right: 10px; }
.tr-cloud { width: 15px; height: 15px; background: #fff; border-radius: 2px; display: flex; align-items: center; justify-content: center; margin-right: 11px; }
.tr-wifi { margin-right: 8px; }
.tr-batt { margin-right: 8px; }
.tr-vol { margin-right: 8px; }
.tr-eng { font-size: 12px; width: 24px; }
.tr-clock { width: 58px; margin-left: 13px; display: flex; flex-direction: column; align-items: center; font-size: 11px; line-height: 19px; white-space: nowrap; }
.tr-note { position: relative; margin: 0 25px 0 18px; }
.note-badge { position: absolute; left: 7px; top: 6px; width: 15px; height: 15px; border-radius: 50%; background: #333; border: 1px solid #999; color: #fff; font-size: 10px; line-height: 13px; text-align: center; font-weight: 700; }
```
